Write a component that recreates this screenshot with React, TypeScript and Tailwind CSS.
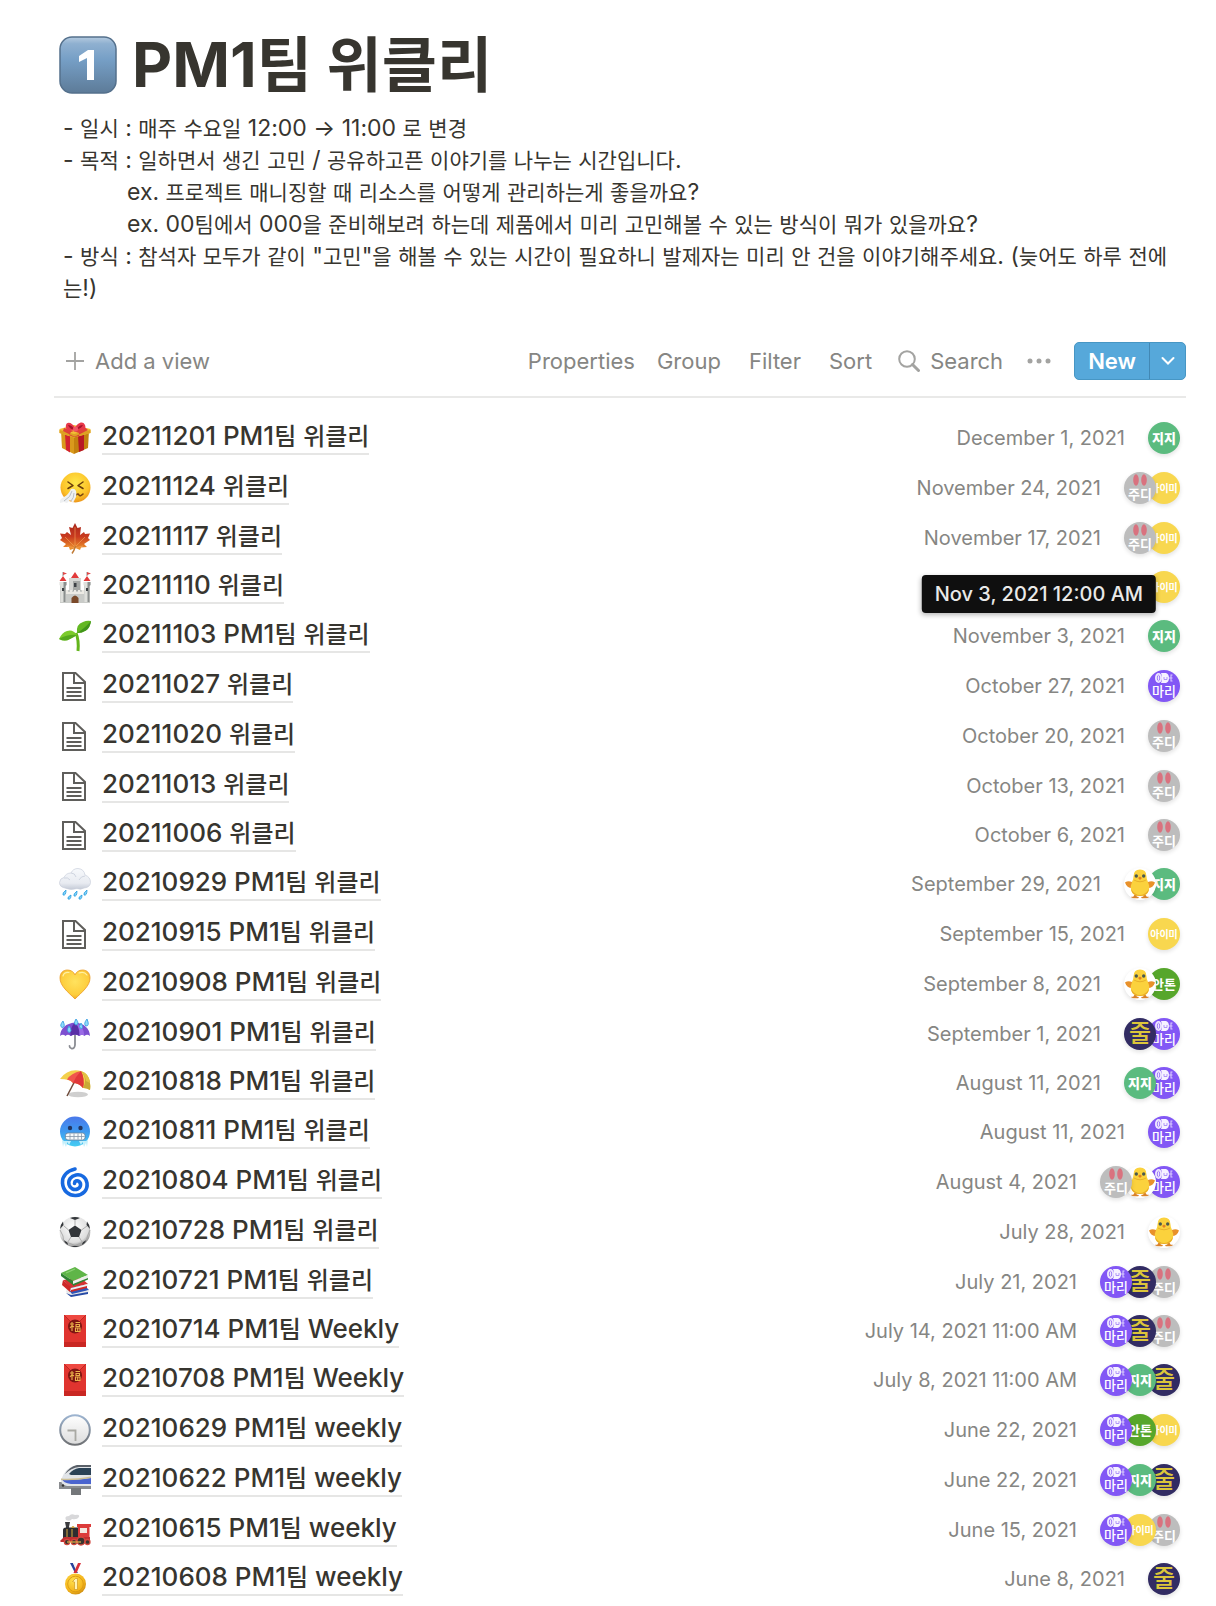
import React from "react";

const FONT = "font-['Inter','Noto_Sans_CJK_KR',sans-serif]";

type IconName =
  | "gift" | "sneeze" | "maple" | "castle" | "seedling" | "page" | "rain" | "heart"
  | "umbrella" | "parasol" | "cold" | "cyclone" | "soccer" | "books" | "envelope"
  | "clock" | "monorail" | "train" | "medal";

const ICONS: Record<IconName, React.ReactNode> = {
  gift: (
    <>
      <path d="M2 9 L15 13 V32 L3 26 Z" fill="#d99a1c" />
      <path d="M30 9 L15 13 V32 L29 26 Z" fill="#c4810f" />
      <path d="M6 12 L11 14 V30.500 L7 28 Z" fill="#d3232f" />
      <path d="M19 14 L25 12 V28 L20 30 Z" fill="#b81825" />
      <path d="M0.500 7 L15 3 L31.500 7 V11 L15 15.500 L0.500 11 Z" fill="#f2bf35" />
      <path d="M0.500 8 L15 12 L31.500 8 V11 L15 15.500 L0.500 11 Z" fill="#dda023" />
      <path d="M5 6 L20 11 V14 L16 15 L4 9Z M26 5.500 L12 10 L10 13 L15 15 L29 8Z" fill="#dc2b3a" opacity=".85" />
      <path d="M16 8 C8 10 6 7 7 3 C8 -1 14 1 16 6 C18 1 24 -2 26 3 C28 8 22 9 16 8Z" fill="#e8384a" />
      <path d="M9 3 Q13 3 15 7 Q11 8 9 3 M24 3 Q20 3 18 7 Q22 7 24 3" fill="#a5142a" />
      <circle cx="16.500" cy="7" r="2.500" fill="#f05565" />
    </>
  ),
  sneeze: (
    <>
      <defs>
        <radialGradient id="face" cx=".5" cy=".35" r=".65">
          <stop offset="0" stopColor="#ffe84a" />
          <stop offset=".7" stopColor="#fcc32a" />
          <stop offset="1" stopColor="#ec951a" />
        </radialGradient>
      </defs>
      <circle cx="16.500" cy="15.500" r="15" fill="url(#face)" />
      <path d="M9 10 L14 13.500 L9 16.500 M24 10 L19 13.500 L24 16.500" fill="none" stroke="#6b3d0b" strokeWidth="1.500" strokeLinecap="round" strokeLinejoin="round" />
      <path d="M17 23 Q19 21 20 23 T24 22" fill="none" stroke="#7a4410" strokeWidth="1.600" strokeLinecap="round" />
      <path d="M12 17 Q16 16 17 19 Q18 24 16 27 L14 31 L11 28 L8 31 L5 30 L1 31 Q0 27 5 25 Q10 22 12 17Z" fill="#eef0f2" />
      <path d="M13 19 Q12 25 5 29 M15 21 Q15 26 12 29" fill="none" stroke="#b9bec4" strokeWidth="1" />
    </>
  ),
  maple: (
    <>
      <defs>
        <linearGradient id="leaf" x1="0" y1="0" x2="0" y2="1">
          <stop offset="0" stopColor="#a8271c" />
          <stop offset=".5" stopColor="#c93a1f" />
          <stop offset="1" stopColor="#f09a2c" />
        </linearGradient>
      </defs>
      <path d="M16 1 L18.500 6 L22 5 L21 13 L25 10 L26 12 L31 11.500 L29 16 L31 18 L25 22 L28 25 L22 25.500 L21 28 L16.500 26 L11 28 L10 25 L4 25 L7 22 L1 18 L3 16 L1 11.500 L6 12 L8 10 L12 13 L10 5 L13.500 6Z" fill="url(#leaf)" />
      <path d="M16 5 V26 M16 25 L6 15 M16 25 L26 15 M16 26 L8 24 M16 26 L24 24" fill="none" stroke="#f3a45c" strokeWidth=".6" />
      <path d="M16.500 24 Q15 29 13 31.500" fill="none" stroke="#c07a35" strokeWidth="1.500" />
    </>
  ),
  castle: (
    <>
      <path d="M1 12 H7 V19 H25 V12 H31 V32 H1Z" fill="#c9cbc8" />
      <path d="M10.500 9 H21.500 V20 H10.500Z" fill="#a5a8a5" />
      <path d="M10.500 9 H14 V20 H10.500Z" fill="#d6d7d3" />
      <path d="M0.500 11 H7.500 V14 L6.500 15 V31 H1.500 V15 L.5 14Z M24.500 11 H31.500 V14 L30.500 15 V31 H25.500 V15 L24.500 14Z" fill="#dfe0dc" />
      <path d="M4.500 11 H7.500 V14 L6.500 15 V31 H4.500Z M28.500 11 H31.500 V14 L30.500 15 V31 H28.500Z" fill="#8b8f8e" />
      <path d="M7 19 h2 v2 h2 v-2 h2 v2 h2 v-2 h2 v2 h2 v-2 h2 v2 h2 v-2 h2 v4 H7Z" fill="#eceae4" />
      <path d="M12 7 L16 1 L20 7 Z M0.500 10 L4 5 L7.500 10Z M24.500 10 L28 5 L31.500 10Z" fill="#e23b3b" />
      <path d="M10 7 H22 V10 H10Z" fill="#d8d9d5" />
      <path d="M4 1 V5 M28 1 V5" stroke="#777" strokeWidth=".8" />
      <path d="M4 1 L8 2.500 L4 4Z M28 1 L32 2.500 L28 4Z M16 0 L16 3Z" fill="#e04747" />
      <path d="M12.500 32 V27 Q16 22 19.500 27 V32Z" fill="#7b4a2a" />
      <path d="M3 17 h2 v3 h-2z M27 17 h2 v3 h-2z M15 12 h2.500 v4 h-2.500z" fill="#3d4144" />
    </>
  ),
  seedling: (
    <>
      <path d="M19 31 Q20 20 17 13" fill="none" stroke="#63b51c" strokeWidth="3" />
      <path d="M18 13 Q17 4 24 2 Q28 0 32 1 Q31 8 27 10.500 Q23 13 18 13Z" fill="#63b822" />
      <path d="M18 13 Q25 9 32 1 Q31 8 27 10.500 Q23 13 18 13Z" fill="#41951a" />
      <path d="M18 15 Q14 9 8 11 Q3 12.500 0 19 Q6 22 11 19 Q15 17 18 15Z" fill="#7ccb2c" />
      <path d="M18 15 Q9 14 0 19 Q6 22 11 19 Q15 17 18 15Z" fill="#55a91d" />
    </>
  ),
  page: (
    <g fill="none" stroke="#5f5e5b" strokeWidth="2">
      <path d="M4 3 H16.500 L26 12 V30 H4Z" />
      <path d="M15 3 V13 H26" />
      <path d="M7.500 18 H22.500 M7.500 22 H22.500 M7.500 26 H22.500" />
    </g>
  ),
  rain: (
    <>
      <defs>
        <linearGradient id="cloud" x1="0" y1="0" x2="0" y2="1">
          <stop offset="0" stopColor="#f7f9fc" />
          <stop offset=".7" stopColor="#e8ebf1" />
          <stop offset="1" stopColor="#c4cad6" />
        </linearGradient>
      </defs>
      <path d="M6 20 Q0.500 19 0.500 14.500 Q1 10 5 9.500 Q7 5 12 5 Q14 0.500 19 0.500 Q25 1 26 7 Q31.500 9 31.500 14.500 Q31 19.500 25 20 Q22 22 18 20.500 Q11 22.500 6 20Z" fill="url(#cloud)" stroke="#c8cfdb" strokeWidth=".7" />
      <path d="M5 10 Q9 9 11 12 M12 5 Q16 5 17 9 M26 8 Q22 8 20 12" fill="none" stroke="#cfd5e0" strokeWidth="1" />
      <path d="M7 22 q-4 3-3 5 q3 1 3-5 M18 23 q-4 3-3 5 q3 1 3-5 M28 22 q-4 3-3 5 q3 1 3-5 M12 27 q-4 2-3 4 q3 1 3-4 M23 27 q-4 2-3 4 q3 1 3-4" fill="#7fd0f7" stroke="#2a9fe0" strokeWidth=".8" />
    </>
  ),
  heart: (
    <>
      <defs>
        <radialGradient id="heart" cx=".5" cy=".4" r=".65">
          <stop offset="0" stopColor="#ffe25e" />
          <stop offset=".7" stopColor="#fdcd3c" />
          <stop offset="1" stopColor="#ee9d20" />
        </radialGradient>
      </defs>
      <path d="M16 31 C9 24 1 18 1 10 C1 5 4 2 8.500 2 C12 2 15 4 16 7 C17 4 20 2 23.500 2 C28 2 31 5 31 10 C31 18 23 24 16 31Z" fill="url(#heart)" stroke="#eb9a25" strokeWidth=".8" />
      <path d="M4 8 Q5 4 10 4.500 M20 5 Q25 3 28 7" fill="none" stroke="#fff0a5" strokeWidth="1.200" strokeLinecap="round" />
    </>
  ),
  umbrella: (
    <>
      <path d="M16 15 V27 Q15.500 31 12.500 30.500 Q10.500 30 10.500 28" fill="none" stroke="#8b8d93" strokeWidth="1.800" strokeLinecap="round" />
      <path d="M1 18 Q2 6 16 4.500 Q30 6 31 18 Q28 15.500 25.500 18 Q23 15.500 20.500 18 Q16 15 11.500 18 Q9 15.500 6.500 18 Q4 15.500 1 18Z" fill="#7d4fd0" />
      <path d="M11.500 18 Q11 9 16 4.500 Q21 9 20.500 18 Q16 15 11.500 18Z" fill="#5a2fa6" />
      <path d="M20.500 18 Q21 9 16 4.500 Q25 8 25.500 18 Q23 15.500 20.500 18Z" fill="#9a6be6" />
      <path d="M4 3 q-4 5-1 6.500 q4 0 1-6.500 M17 1 q-3 5 0 6 q4-1 0-6 M28 1 q-4 5-1 7 q4 0 1-7 M10 8 q-3 5 0 6.500 q4-1 0-6.500 M22 5 q-3 4 0 6 q3-1 0-6" fill="#8edafa" stroke="#3b9fe2" strokeWidth=".9" />
    </>
  ),
  parasol: (
    <>
      <ellipse cx="19" cy="27.500" rx="10" ry="2.800" fill="#cfcfcf" />
      <path d="M18 10 L8 29" stroke="#6e4a3a" strokeWidth="1.500" />
      <path d="M1 12 Q9 1 22 4 Q33 9 31 23 Q27 21 24 21 Q20 16 14 16 Q11 12 1 12Z" fill="#f3d04c" />
      <path d="M22 4 Q12 6 8 12.500 Q12 13 14 16 Q20 16 24 21 Q26 12 22 4Z" fill="#f0564d" />
      <path d="M22 4 Q17 9 14 16 Q20 16 24 21 Q26 12 22 4Z" fill="#e0383a" />
      <path d="M22 4 Q29 12 24 21 Q27 20.500 31 23 Q33 9 22 4Z" fill="#c9a936" />
      <path d="M22 4 Q30 6 31 16 L27 14 Q26 8 22 4Z" fill="#e3c244" />
    </>
  ),
  cold: (
    <>
      <defs>
        <linearGradient id="cold" x1="0" y1="0" x2="0" y2="1">
          <stop offset="0" stopColor="#4a78ea" />
          <stop offset=".5" stopColor="#3f9af0" />
          <stop offset="1" stopColor="#45cdf2" />
        </linearGradient>
      </defs>
      <circle cx="16" cy="15.500" r="15" fill="url(#cold)" />
      <circle cx="11" cy="12" r="2.200" fill="#24355f" />
      <circle cx="21.500" cy="12" r="2.200" fill="#24355f" />
      <rect x="6.500" y="17" width="19.500" height="7" rx="2.500" fill="#f6fafc" stroke="#6a7f98" strokeWidth=".8" />
      <path d="M7 20.500 H25.500 M11 17.500 V23.500 M15 17.500 V23.500 M19 17.500 V23.500 M22.500 17.500 V23.500" stroke="#8797a8" strokeWidth=".8" />
      <path d="M3 24 L4 31 L5 27 L7 31 L8.500 26 L10 29 L12 25 H5Z M29 24 L28 31 L27 27 L25 31 L23.500 26 L22 29 L20 25 H27Z" fill="#c4effb" />
    </>
  ),
  cyclone: (
    <path d="M16 3 C8 5 3 10 3.500 17 C4 25 10 30 17 29.500 C24 29 29 24 28 17 C27 11 22 8 17 9 C12 10 9 14 10 18.500 C11 22.500 15 24.500 18.500 23 C22 21.500 22.500 17.500 20 15.500 C18 14 15.500 15 15.500 17.500" fill="none" stroke="#1769e0" strokeWidth="3.600" strokeLinecap="round" />
  ),
  soccer: (
    <>
      <defs>
        <radialGradient id="ball" cx=".45" cy=".35" r=".65">
          <stop offset="0" stopColor="#ffffff" />
          <stop offset=".75" stopColor="#dedede" />
          <stop offset="1" stopColor="#8c8c8c" />
        </radialGradient>
      </defs>
      <circle cx="16" cy="16" r="15.300" fill="url(#ball)" />
      <path d="M16 9.500 L22.500 14 L20 21 H12 L9.500 14Z" fill="#33363a" />
      <path d="M11 2 L16 4 L21 2 Q16 0 11 2Z M1 13 L4.500 9 L4 5.500 Q1 9 1 13Z M31 13 L27.500 9 L28 5.500 Q31 9 31 13Z M4.500 24 L8.500 26.500 L9 29 Q6 27.500 4.500 24Z M27.500 24 L23.500 26.500 L23 29 Q26 27.500 27.500 24Z M12 31 L16 29.500 L20 31Z" fill="#33363a" />
      <path d="M16 4 V9.500 M22.500 14 L28 10 M20 21 L23.500 26.500 M12 21 L8.500 26.500 M9.500 14 L4.500 9.500 M1 14 L4 20 L4.500 24 M31 14 L28.500 20 L27.500 24 M8.500 26.500 L16 29.500 L23.500 26.500" stroke="#a6a6a6" strokeWidth=".9" fill="none" />
    </>
  ),
  books: (
    <>
      <path d="M8 22 L25 19 L30 24 L13 30Z" fill="#2f56b8" />
      <path d="M8 22 L7 26 L12 31 L29 27 L30 24 L13 28Z" fill="#e9e9ea" />
      <path d="M12 29 L29 26 V28 L12 31 L7 27Z" fill="#274ba6" />
      <path d="M4 14 L22 12 L29 18 L12 22Z" fill="#d63333" />
      <path d="M4 14 L3 18 L11 25 L28 21 L29 18 L12 22Z" fill="#eeeeef" />
      <path d="M4 14 L12 21 L11 26 L3 19Z M12 24 L28 20 V22 L12 26Z" fill="#cd2828" />
      <path d="M2 7 L16 1 L29 9 L14 15Z" fill="#5fb548" />
      <path d="M14 15 L29 9 L29 12 L14 19Z" fill="#eceeea" />
      <path d="M2 7 L14 15 V19 L2 10Z" fill="#2f8233" />
      <path d="M14 18 L29 12 V13.500 L14 20Z" fill="#2f8233" />
      <path d="M7 7 L16 3" stroke="#8bd174" strokeWidth="1.200" />
    </>
  ),
  envelope: (
    <>
      <rect x="5" y="0" width="22" height="32" fill="#e0342f" />
      <path d="M5 27 H27 V32 H5Z" fill="#c92723" />
      <path d="M5 0 L16 11 L27 0" fill="#ee4841" stroke="#b81f1d" strokeWidth=".8" />
      <circle cx="16" cy="11.500" r="7" fill="#7e1512" />
      <path d="M11 9 H15 M13 7 V16 M11 13 L13 10.500 L15 12 M16.500 7.500 H21 M17 9.500 H20.500 V11.500 H17Z M16.500 13 H21 V16.500 H16.500Z M18.700 13 V16" fill="none" stroke="#eab14b" strokeWidth="1.100" />
    </>
  ),
  clock: (
    <>
      <defs>
        <linearGradient id="rim" x1="0" y1="0" x2="0" y2="1">
          <stop offset="0" stopColor="#9db4d0" />
          <stop offset="1" stopColor="#6f7174" />
        </linearGradient>
        <linearGradient id="dial" x1="0" y1="0" x2="0" y2="1">
          <stop offset="0" stopColor="#ffffff" />
          <stop offset="1" stopColor="#dcdcdc" />
        </linearGradient>
      </defs>
      <circle cx="16" cy="16" r="14.800" fill="url(#dial)" stroke="url(#rim)" strokeWidth="2" />
      <path d="M8.500 16.500 H16.500 V27" fill="none" stroke="#a9a9a3" strokeWidth="1.800" />
    </>
  ),
  monorail: (
    <>
      <path d="M0 18 H32 V25 H22 V31 H12 V25 H0Z" fill="#8a8d90" />
      <path d="M12 24 H22 V31 H12Z" fill="#74777a" />
      <path d="M2 16 Q6 3 18 1 H32 V22 H8 Q2 21 2 16Z" fill="#e1e4e8" />
      <path d="M6 10 Q10 3 18 1 H32 V3 H20 Q12 4 6 10Z" fill="#5a6068" />
      <path d="M10 10 Q14 5 20 4 H32 V11 H12Z" fill="#2a4256" />
      <path d="M3 15 Q14 17 32 14 V20 H12 Q4 19 3 15Z" fill="#4a64cf" />
      <path d="M2 14.500 Q14 15.500 32 12.500 V14 Q14 17 2 16Z" fill="#cdbf95" />
      <circle cx="4" cy="21.500" r="1.200" fill="#333" />
    </>
  ),
  train: (
    <>
      <path d="M7 6 Q5 2 10 2 Q12 -1 16 1 Q21 0 20 3 Q18 6 13 5 Q11 8 7 6Z" fill="#d8d8da" />
      <path d="M6 8 H11 L10 13 V18 H7 V13Z" fill="#3b3b3e" />
      <path d="M4 16 Q4 13 8 13.500 H20 V25 H4Z" fill="#2c2d30" />
      <path d="M12 14 q2-4 4 0z" fill="#c99a34" />
      <path d="M18 10 H32 V13 H30.500 V25 H19 V13 H18Z" fill="#dc3b3a" />
      <path d="M21 14 H28 V19 H21Z" fill="#f3e7df" />
      <path d="M13 15 V24 M8 15 V24" stroke="#d9a93d" strokeWidth="1" />
      <path d="M1 27 L5 23 H31 V28 H2Z" fill="#c22f31" />
      <g fill="#39332f" stroke="#d3493f" strokeWidth="1.300">
        <circle cx="8" cy="28" r="2.600" />
        <circle cx="15" cy="28" r="2.600" />
        <circle cx="22" cy="27" r="4" />
        <circle cx="28.500" cy="28" r="2.500" />
      </g>
      <path d="M8 28 H22" stroke="#e0b24c" strokeWidth="1.200" />
    </>
  ),
  medal: (
    <>
      <defs>
        <radialGradient id="gold" cx=".4" cy=".35" r=".7">
          <stop offset="0" stopColor="#ffe04d" />
          <stop offset=".7" stopColor="#f5b51b" />
          <stop offset="1" stopColor="#cb8a10" />
        </radialGradient>
      </defs>
      <path d="M11 0 H14 L19 10 H16Z" fill="#27429b" />
      <path d="M14 0 H16 L19 7 L18 10Z" fill="#f3f3f5" />
      <path d="M22 0 H19 L14.500 10 H17.500Z" fill="#d9303a" />
      <circle cx="16.500" cy="21" r="10.500" fill="url(#gold)" />
      <circle cx="16.500" cy="21" r="7.800" fill="none" stroke="#d99a14" strokeWidth=".9" />
      <path d="M13.500 18.500 L16.500 15.500 H18.500 V26.500 H15.500 V19Z" fill="#fff3b5" stroke="#c98d14" strokeWidth=".6" />
    </>
  ),
};

function Icon({ name }: { name: IconName }) {
  return (
    <svg viewBox="0 0 32 32" className="size-8 shrink-0" aria-hidden="true">
      {ICONS[name]}
    </svg>
  );
}

function Chick() {
  return (
    <svg viewBox="0 0 32 32" className="size-8" role="img" aria-label="병아리">
      <path d="M12 26 L10 29 M12 26 V29.500 M20 26 L22 29 M20 26 V29.500 M7.500 29.500 H14 M18 29.500 H24.500" stroke="#d9822b" strokeWidth="1.500" strokeLinecap="round" />
      <path d="M10 15 Q5 12 1 14.500 Q3 20.500 9 20Z M22 15 Q27 12 31 14.500 Q29 20.500 23 20Z" fill="#e8912a" />
      <path d="M9.500 8.500 Q9.500 1.500 16 1.500 Q22.500 1.500 22.500 8.500 Q22.500 11 24 14 Q26 18 25 22 Q23.500 28 16 28 Q8.500 28 7 22 Q6 18 8 14 Q9.500 11 9.500 8.500Z" fill="#fbd23d" />
      <path d="M7 21 Q11 27 16 27 Q21 27 25 21 Q24 28 16 28 Q8 28 7 21Z" fill="#e9ad27" />
      <path d="M10 12 Q16 15.500 22 12" stroke="#e9b22c" strokeWidth="1" fill="none" />
      <circle cx="12.300" cy="8" r="1.700" fill="#4a5a50" />
      <circle cx="19.700" cy="8" r="1.700" fill="#4a5a50" />
      <path d="M14 10 L16 8.500 L18 10 L16 12Z" fill="#e58321" />
    </svg>
  );
}

type Person = "jiji" | "judy" | "aimi" | "mari" | "chick" | "anton" | "jul";

function Avatar({ who }: { who: Person }) {
  const base =
    "flex size-8 shrink-0 flex-col items-center justify-center overflow-hidden rounded-full shadow-[0_2px_4px_rgba(15,15,15,0.12)]";
  switch (who) {
    case "jiji":
      return <span className={`${base} bg-[#5bbb7f] text-[13px] leading-4 font-black text-white`}>지지</span>;
    case "judy":
      return (
        <span className={`${base} bg-[#bdbdbd] text-[13px] leading-4 font-bold text-white`}>
          <svg viewBox="0 0 16 12" className="h-3 w-4 shrink-0" aria-hidden="true">
            <ellipse cx="4" cy="6" rx="2.800" ry="5.800" fill="#d9727f" />
            <ellipse cx="12" cy="6" rx="2.800" ry="5.800" fill="#d9727f" />
          </svg>
          주디
        </span>
      );
    case "aimi":
      return <span className={`${base} bg-[#f8d74f] text-[10px] leading-4 font-bold text-white`}>아이미</span>;
    case "mari":
      return (
        <span className={`${base} bg-[#8257f5] text-[13px] leading-4 font-medium text-white`}>
          <svg viewBox="0 0 18 10" className="h-[10px] w-[18px] shrink-0" aria-hidden="true">
            <ellipse cx="3.500" cy="5" rx="3.500" ry="5" fill="#efe8ff" />
            <ellipse cx="3.500" cy="5" rx="1.200" ry="2.800" fill="none" stroke="#8f68f6" strokeWidth=".8" />
            <path d="M6 0 H11 Q14 1 14 5 Q14 9 11 10 H6 Q8 5 6 0Z" fill="#f6f2ff" />
            <path d="M9 4 V6.500 H12 V4" stroke="#a88bf8" strokeWidth=".9" fill="none" />
            <path d="M14 5 H15.500 M17.500 2 H16 V8 H17.500 M16 5 H17.500" stroke="#d9cbfd" strokeWidth="1.100" fill="none" />
          </svg>
          마리
        </span>
      );
    case "anton":
      return <span className={`${base} bg-[#56a62b] text-[13px] leading-4 font-bold text-white`}>안톤</span>;
    case "jul":
      return <span className={`${base} bg-[#322c63] text-2xl leading-8 font-medium text-[#dcc63a]`}>줄</span>;
    case "chick":
      return (
        <span className={`${base} bg-white`}>
          <Chick />
        </span>
      );
  }
}

/* Hangul is set slightly smaller than the Latin text beside it. */
function Mixed({ text, hangul }: { text: string; hangul: string }) {
  return (
    <>
      {text.split(/([\uac00-\ud7a3]+)/).map((part, i) =>
        i % 2 ? (
          <span key={i} className={hangul}>
            {part}
          </span>
        ) : (
          part
        ),
      )}
    </>
  );
}

type Row = { icon: IconName; title: string; date?: string; people: Person[]; tip?: string };

const ROWS: Row[] = [
  { icon: "gift", title: "20211201 PM1팀 위클리", date: "December 1, 2021", people: ["jiji"] },
  { icon: "sneeze", title: "20211124 위클리", date: "November 24, 2021", people: ["judy", "aimi"] },
  { icon: "maple", title: "20211117 위클리", date: "November 17, 2021", people: ["judy", "aimi"] },
  { icon: "castle", title: "20211110 위클리", people: ["aimi"] },
  { icon: "seedling", title: "20211103 PM1팀 위클리", date: "November 3, 2021", people: ["jiji"], tip: "Nov 3, 2021 12:00 AM" },
  { icon: "page", title: "20211027 위클리", date: "October 27, 2021", people: ["mari"] },
  { icon: "page", title: "20211020 위클리", date: "October 20, 2021", people: ["judy"] },
  { icon: "page", title: "20211013 위클리", date: "October 13, 2021", people: ["judy"] },
  { icon: "page", title: "20211006 위클리", date: "October 6, 2021", people: ["judy"] },
  { icon: "rain", title: "20210929 PM1팀 위클리", date: "September 29, 2021", people: ["chick", "jiji"] },
  { icon: "page", title: "20210915 PM1팀 위클리", date: "September 15, 2021", people: ["aimi"] },
  { icon: "heart", title: "20210908 PM1팀 위클리", date: "September 8, 2021", people: ["chick", "anton"] },
  { icon: "umbrella", title: "20210901 PM1팀 위클리", date: "September 1, 2021", people: ["jul", "mari"] },
  { icon: "parasol", title: "20210818 PM1팀 위클리", date: "August 11, 2021", people: ["jiji", "mari"] },
  { icon: "cold", title: "20210811 PM1팀 위클리", date: "August 11, 2021", people: ["mari"] },
  { icon: "cyclone", title: "20210804 PM1팀 위클리", date: "August 4, 2021", people: ["judy", "chick", "mari"] },
  { icon: "soccer", title: "20210728 PM1팀 위클리", date: "July 28, 2021", people: ["chick"] },
  { icon: "books", title: "20210721 PM1팀 위클리", date: "July 21, 2021", people: ["mari", "jul", "judy"] },
  { icon: "envelope", title: "20210714 PM1팀 Weekly", date: "July 14, 2021 11:00 AM", people: ["mari", "jul", "judy"] },
  { icon: "envelope", title: "20210708 PM1팀 Weekly", date: "July 8, 2021 11:00 AM", people: ["mari", "jiji", "jul"] },
  { icon: "clock", title: "20210629 PM1팀 weekly", date: "June 22, 2021", people: ["mari", "anton", "aimi"] },
  { icon: "monorail", title: "20210622 PM1팀 weekly", date: "June 22, 2021", people: ["mari", "jiji", "jul"] },
  { icon: "train", title: "20210615 PM1팀 weekly", date: "June 15, 2021", people: ["mari", "aimi", "judy"] },
  { icon: "medal", title: "20210608 PM1팀 weekly", date: "June 8, 2021", people: ["jul"] },
];

const NOTES = [
  { text: "- 일시 : 매주 수요일 12:00 → 11:00 로 변경", indent: false },
  { text: "- 목적 : 일하면서 생긴 고민 / 공유하고픈 이야기를 나누는 시간입니다.", indent: false },
  { text: "ex. 프로젝트 매니징할 때 리소스를 어떻게 관리하는게 좋을까요?", indent: true },
  { text: "ex. 00팀에서 000을 준비해보려 하는데 제품에서 미리 고민해볼 수 있는 방식이 뭐가 있을까요?", indent: true },
  { text: '- 방식 : 참석자 모두가 같이 "고민"을 해볼 수 있는 시간이 필요하니 발제자는 미리 안 건을 이야기해주세요. (늦어도 하루 전에는!)', indent: false },
];

function ListRow({ row }: { row: Row }) {
  return (
    <li className="flex h-[50px] items-center pr-1.5 pl-[5px] nth-[5n+4]:h-12">
      <Icon name={row.icon} />
      <a href="#" className="mb-0.5 ml-[11px] border-b-2 border-[#e6e6e5] text-[26px] leading-[34px] font-medium whitespace-nowrap text-[#37352f]">
        <Mixed text={row.title} hangul="text-2xl leading-none" />
      </a>
      {row.date && (
        <span className="relative ml-auto text-xl leading-7 whitespace-nowrap text-[#868683]">
          {row.date}
          {row.tip && (
            <span role="tooltip" className="absolute bottom-[37px] left-1/2 z-10 -translate-x-1/2 rounded-[4px] bg-[#0f0f0f] px-[13px] py-[5px] font-medium text-[#e9e9e8] shadow-[0_2px_5px_rgba(15,15,15,0.3)]">
              {row.tip}
            </span>
          )}
        </span>
      )}
      <span className={row.date ? "ml-[23px] flex flex-row-reverse" : "ml-auto flex flex-row-reverse"}>
        {[...row.people].reverse().map((who, i) => (
          <span key={who} className={i === 0 ? "relative" : "relative -mr-2"}>
            <Avatar who={who} />
          </span>
        ))}
      </span>
    </li>
  );
}

export default function App() {
  return (
    <main className={`${FONT} min-h-screen bg-white pr-[30px] pl-[54px] text-[#37352f]`}>
      <h1 className="flex items-center gap-[15px] pt-6 pl-[5px] text-[62px] leading-[82px] font-bold">
        <svg viewBox="0 0 58 58" className="size-[58px] shrink-0" role="img" aria-label="1">
          <defs>
            <linearGradient id="key" x1="0" y1="0" x2="0" y2="1">
              <stop offset="0" stopColor="#b5cbe0" />
              <stop offset=".12" stopColor="#8fb0d0" />
              <stop offset=".4" stopColor="#769fc6" />
              <stop offset="1" stopColor="#5d7b98" />
            </linearGradient>
          </defs>
          <rect x="1" y="1" width="56" height="56" rx="12" fill="url(#key)" stroke="#54708c" strokeWidth="1.500" />
          <path d="M29 14 H35 V44 H28 V22 L20 26 V20 Z" fill="#fff" />
        </svg>
        <span>
          <Mixed text="PM1팀 위클리" hangul="text-[60px] leading-none" />
        </span>
      </h1>

      <div className="mt-1.5 pl-[9px] text-[23px] leading-8">
        {NOTES.map((note) => (
          <p key={note.text} className={note.indent ? "pl-16" : ""}>
            <Mixed text={note.text} hangul="text-[21px] leading-none" />
          </p>
        ))}
      </div>

      <div className="mt-7 flex h-[66px] items-center border-b-2 border-[#e9e9e8] pb-1.5 pl-[11px] text-[22px] leading-8 text-[#868683]">
        <button type="button" className="flex items-center gap-2.5">
          <svg viewBox="0 0 20 20" className="size-5" aria-hidden="true">
            <path d="M10 1 V19 M1 10 H19" stroke="#a3a3a1" strokeWidth="1.800" />
          </svg>
          Add a view
        </button>
        <div className="ml-auto flex items-center">
          <button type="button">Properties</button>
          <button type="button" className="ml-[22px]">Group</button>
          <button type="button" className="ml-7">Filter</button>
          <button type="button" className="ml-7">Sort</button>
          <button type="button" className="ml-[26px] flex items-center gap-2.5">
            <svg viewBox="0 0 22 22" className="size-[22px]" aria-hidden="true">
              <circle cx="9" cy="9" r="7.800" fill="none" stroke="#a3a3a1" strokeWidth="2" />
              <path d="M14.500 14.500 L20.500 20.500" stroke="#a3a3a1" strokeWidth="3" strokeLinecap="round" />
            </svg>
            Search
          </button>
          <button type="button" aria-label="More" className="ml-6">
            <svg viewBox="0 0 24 6" className="h-1.5 w-6" fill="#a3a3a1" aria-hidden="true">
              <circle cx="3" cy="3" r="2.500" />
              <circle cx="12" cy="3" r="2.500" />
              <circle cx="21" cy="3" r="2.500" />
            </svg>
          </button>
          <div className="ml-[23px] flex h-[38px] overflow-hidden rounded-[5px] border border-[#4796c4] bg-[#56a8da]">
            <button type="button" className="border-r border-[#4288b4] px-[13px] font-semibold text-white">New</button>
            <button type="button" aria-label="New options" className="flex w-[35px] items-center justify-center">
              <svg viewBox="0 0 14 10" className="h-2.5 w-3.5" aria-hidden="true">
                <path d="M1.500 2 L7 7.500 L12.500 2" fill="none" stroke="#fff" strokeWidth="2" strokeLinecap="round" />
              </svg>
            </button>
          </div>
        </div>
      </div>

      <ul className="pt-[15px]">
        {ROWS.map((row) => (
          <ListRow key={row.title} row={row} />
        ))}
      </ul>
    </main>
  );
}
